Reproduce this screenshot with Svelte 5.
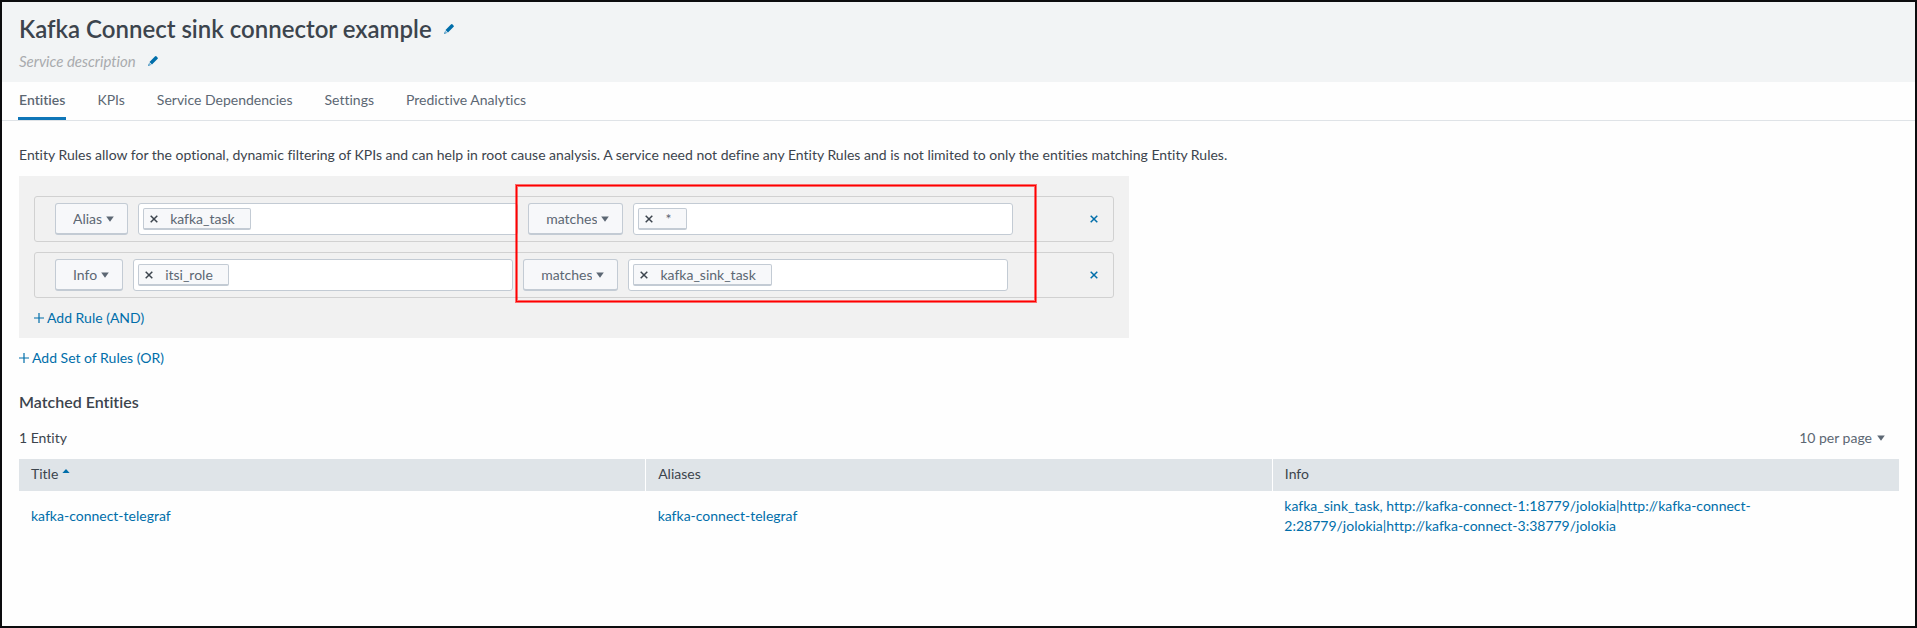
<script>
  const tabs = ['Entities', 'KPIs', 'Service Dependencies', 'Settings', 'Predictive Analytics'];
  const fieldTypes = ['Alias', 'Info', 'Title'];
  const operators = ['matches', 'does not match', 'matches a value to be defined in the service'];
  const pageSizes = ['10 per page', '20 per page', '50 per page'];

  let active = $state('Entities');
  let pageSize = $state('10 per page');
  let rules = $state([
    { type: 'Alias', field: 'kafka_task', operator: 'matches', value: '*' },
    { type: 'Info', field: 'itsi_role', operator: 'matches', value: 'kafka_sink_task' }
  ]);

  const entities = [
    {
      title: 'kafka-connect-telegraf',
      aliases: 'kafka-connect-telegraf',
      info: 'kafka_sink_task, http://kafka-connect-1:18779/jolokia|http://kafka-connect-2:28779/jolokia|http://kafka-connect-3:38779/jolokia'
    }
  ];
</script>

{#snippet pencil()}
  <svg class="pencil" viewBox="0 0 10 10" aria-hidden="true">
    <path d="M6.9.6Q7.8-.3 8.6.5L9.5 1.4Q10.3 2.2 9.4 3.1L4 8.5 1.5 6Z" fill="#006eaa" />
    <path d="M1.1 6.4 3.6 8.9.2 9.8Z" fill="#7fb4d4" />
    <path d="M.6 8.3 1.7 9.4.2 9.8Z" fill="#006eaa" />
  </svg>
{/snippet}

{#snippet caret()}
  <svg class="caret" viewBox="0 0 8 6" aria-hidden="true"><path d="M.2.4H7.8L4 5.8Z" fill="currentColor" /></svg>
{/snippet}

{#snippet cross()}
  <svg class="cross" viewBox="0 0 8 8" aria-hidden="true"><path d="M.7.7 7.3 7.3M7.3.7.7 7.3" stroke="currentColor" stroke-width="1.5" /></svg>
{/snippet}

{#snippet plus()}
  <svg class="plus" viewBox="0 0 10 10" aria-hidden="true"><path d="M5 0V10M0 5H10" stroke="currentColor" stroke-width="1.2" /></svg>
{/snippet}

{#snippet tokens(label, text)}
  <div class="tokens">
    <span class="tag"><button type="button" aria-label="Remove {text}">{@render cross()}</button>{text}</span>
    <input type="text" aria-label={label} />
  </div>
{/snippet}

<div class="page">
  <header>
    <div class="line">
      <h1>Kafka Connect sink connector example</h1>
      <button type="button" aria-label="Edit title">{@render pencil()}</button>
    </div>
    <div class="line">
      <p class="description">Service description</p>
      <button type="button" aria-label="Edit description">{@render pencil()}</button>
    </div>
  </header>

  <nav>
    {#each tabs as tab}
      <button type="button" class:active={tab === active} onclick={() => (active = tab)}>{tab}</button>
    {/each}
  </nav>

  <main>
    <p class="intro">
      Entity Rules allow for the optional, dynamic filtering of KPIs and can help in root cause analysis. A service need not define any Entity Rules and is not limited to only the entities matching Entity Rules.
    </p>

    <section class="rules">
      {#each rules as rule}
        <div class="rule">
          <span class="select">
            <select aria-label="Field type" bind:value={rule.type}>
              {#each fieldTypes as o}<option>{o}</option>{/each}
            </select>
            {@render caret()}
          </span>
          {@render tokens('Field', rule.field)}
          <span class="select">
            <select aria-label="Operator" bind:value={rule.operator}>
              {#each operators as o}<option>{o}</option>{/each}
            </select>
            {@render caret()}
          </span>
          {@render tokens('Value', rule.value)}
          <button type="button" class="remove" aria-label="Remove rule">{@render cross()}</button>
        </div>
      {/each}
      <button type="button" class="add">{@render plus()}Add Rule (AND)</button>
      <div class="highlight"></div>
    </section>
    <button type="button" class="add">{@render plus()}Add Set of Rules (OR)</button>

    <h2>Matched Entities</h2>
    <div class="bar">
      <span>1 Entity</span>
      <span class="select plain">
        <select aria-label="Rows per page" bind:value={pageSize}>
          {#each pageSizes as o}<option>{o}</option>{/each}
        </select>
        {@render caret()}
      </span>
    </div>

    <table>
      <thead>
        <tr>
          <th>Title <svg class="sort" viewBox="0 0 8 4" aria-hidden="true"><path d="M4 0 7.6 4H.4Z" fill="#006eaa" /></svg></th>
          <th>Aliases</th>
          <th>Info</th>
        </tr>
      </thead>
      <tbody>
        {#each entities as e}
          <tr>
            <td><a href="#entity">{e.title}</a></td>
            <td><a href="#aliases">{e.aliases}</a></td>
            <td><a class="info" href="#info">{e.info}</a></td>
          </tr>
        {/each}
      </tbody>
    </table>
  </main>
</div>

<style>
  .page {
    box-sizing: border-box;
    min-height: 100vh;
    border: 2px solid #0c0c0e;
    background: #fefefe;
    color: #3c444d;
    font: 14px/20px Lato, "Open Sans", sans-serif;
    font-variant-ligatures: none;
  }
  .page *, .page *::before { box-sizing: border-box; }
  h1, h2, p { margin: 0; }
  button, select, input {
    margin: 0;
    padding: 0;
    border: 0;
    background: none;
    color: inherit;
    font: inherit;
    font-variant-ligatures: none;
  }
  button { cursor: pointer; }
  svg { display: block; flex: none; }

  header {
    display: flex;
    flex-direction: column;
    gap: 6px;
    height: 80px;
    padding: 11px 17px 0;
    background: #f2f4f5;
  }
  .line { display: flex; align-items: center; gap: 12px; }
  h1 { font-size: 24px; line-height: 32px; font-weight: 600; }
  .description { font-size: 15px; line-height: 20px; font-style: italic; color: #a9abae; }
  .pencil { width: 10px; height: 10px; }

  nav {
    display: flex;
    gap: 30px;
    padding: 0 16px;
    border-bottom: 1px solid #dfe3e7;
  }
  nav button {
    height: 38px;
    padding: 0 1px;
    border-bottom: 3px solid transparent;
    color: #5c6773;
  }
  nav .active { border-color: #0f76b8; font-weight: 600; }

  main { padding: 24px 16px 0 17px; }
  .intro { margin-bottom: 11px; }

  .rules {
    position: relative;
    width: 59%;
    min-width: 1110px;
    padding: 20px 15px 10px;
    background: #f1f1f1;
  }
  .rule {
    display: flex;
    align-items: center;
    gap: 10px;
    height: 46px;
    margin-bottom: 10px;
    padding: 0 15px 0 20px;
    border: 1px solid #d1d1d1;
    border-radius: 3px;
  }
  .select {
    display: grid;
    align-items: center;
    justify-items: end;
    color: #5c6773;
  }
  .select > * { grid-area: 1 / 1; }
  select {
    appearance: none;
    field-sizing: content;
    height: 32px;
    padding: 0 25px 0 17px;
    border: 1px solid #c3cbd4;
    border-bottom-width: 2px;
    border-radius: 3px;
    background: #f7f8fa;
    cursor: pointer;
  }
  .caret { width: 8px; height: 6px; margin-right: 14px; pointer-events: none; }
  .tokens {
    display: flex;
    align-items: center;
    width: 380px;
    height: 32px;
    padding: 0 4px;
    border: 1px solid #c3cbd4;
    border-radius: 3px;
    background: #fff;
  }
  .tokens input { flex: 1; min-width: 0; height: 24px; outline: 0; }
  .tag {
    display: flex;
    align-items: center;
    gap: 12px;
    height: 22px;
    padding: 0 15px 0 6px;
    border: 1px solid #c3cbd4;
    border-bottom-width: 2px;
    border-radius: 2px;
    background: #f7f8fa;
    color: #5c6773;
  }
  .tag button { color: #3c444d; }
  .cross { width: 8px; height: 8px; }
  .remove { margin-left: auto; color: #006eaa; }

  .add {
    display: flex;
    align-items: center;
    gap: 3px;
    height: 20px;
    color: #006eaa;
  }
  .plus { width: 10px; height: 10px; }
  .rules + .add { margin-top: 10px; }
  .highlight {
    position: absolute;
    top: 9px;
    left: 497px;
    width: 520px;
    height: 117px;
    border: 1px solid #f00;
    box-shadow: 0 0 0 1px rgba(255, 0, 0, 0.55), inset 0 0 0 1px rgba(255, 0, 0, 0.55);
    pointer-events: none;
  }

  h2 { margin-top: 23px; font-size: 16px; line-height: 22px; font-weight: 600; }
  .bar {
    display: flex;
    align-items: center;
    justify-content: space-between;
    height: 32px;
    margin: 9px 0 5px;
  }
  .plain select { padding: 0 27px 0 0; border: 0; background: none; }

  table { width: 100%; border-collapse: collapse; table-layout: fixed; }
  th {
    height: 32px;
    padding: 0 12px 2px;
    background: #dfe4e8;
    font-weight: 400;
    text-align: left;
  }
  th + th { border-left: 1px solid #fff; }
  .sort { display: inline-block; width: 8px; height: 4px; vertical-align: 6px; }
  td { padding: 5px 12px 7px; vertical-align: middle; }
  a { color: #006eaa; text-decoration: none; }
  .info { display: block; max-width: 500px; }
</style>
